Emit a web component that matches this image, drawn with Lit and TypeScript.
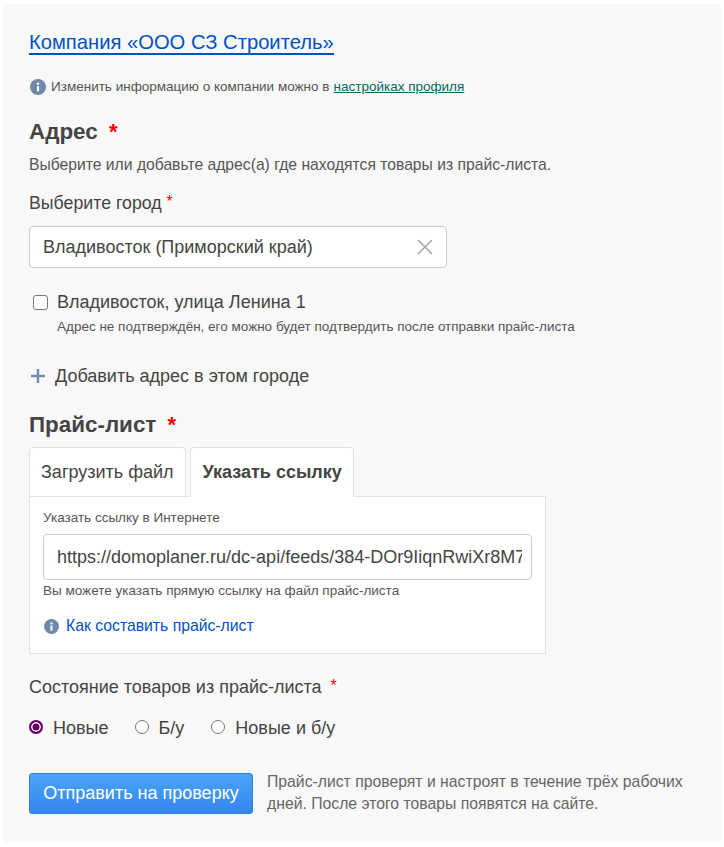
import { LitElement, html, css, svg } from "lit";
import { customElement } from "lit/decorators.js";

const info = (cls: string) => html`<svg class=${cls} viewBox="0 0 16 16" aria-hidden="true">
  <circle cx="8" cy="8" r="8" fill="#7089a9"></circle>
  <rect x="6.9" y="7" width="2.2" height="5.4" fill="#f8f8f8"></rect>
  <circle cx="8" cy="4.7" r="1.25" fill="#f8f8f8"></circle>
</svg>`;

@customElement("app-root")
export class AppRoot extends LitElement {
  static styles = css`
    :host {
      display: block;
      font-family: "Liberation Sans", Arial, sans-serif;
      color: #444;
      background: #fff;
      padding: 4px 2px 5px;
      box-sizing: border-box;
      height: 847px;
    }
    * { box-sizing: border-box; }
    .card {
      background: #f8f8f8;
      border-radius: 5px;
      height: 838px;
      padding: 26px 27px 0;
      display: flex;
      flex-direction: column;
      align-items: flex-start;
    }
    .company {
      font-size: 20.2px;
      line-height: 24px;
      color: #0051c2;
      text-decoration: none;
      border-bottom: 2px solid #0051c2;
      height: 25px;
    }
    .note {
      margin-top: 22px;
      display: flex;
      align-items: center;
      font-size: 13.5px;
      line-height: 20px;
      color: #555;
      height: 20px;
    }
    .note .i { width: 16px; height: 16px; margin: 0 5px 0 1px; }
    .note a { color: #00695c; text-decoration: underline; margin-left: 4px; }
    h2 {
      margin: 0;
      font-size: 22.4px;
      line-height: 28px;
      font-weight: 700;
      color: #444;
    }
    h2 .star { color: #f00; margin-left: 5px; font-size: 22px; font-weight: 700; }
    .h-addr { margin-top: 21px; }
    .desc { margin-top: 9px; font-size: 15.7px; line-height: 20px; color: #555; }
    .label { margin-top: 16px; font-size: 17.75px; line-height: 24px; color: #444; }
    .label .star { color: #f00; font-size: 16px; line-height: 0; vertical-align: 2px; }
    .select {
      margin-top: 11px;
      width: 418px;
      height: 42px;
      background: #fff;
      border: 1px solid #ccc;
      border-radius: 4px;
      display: flex;
      align-items: center;
      justify-content: space-between;
      padding: 0 12px 0 13px;
      font-size: 18px;
    }
    .select svg { width: 18px; height: 18px; }
    .addr { margin-top: 22px; margin-left: 4px; display: grid; grid-template-columns: 24px auto; }
    .box {
      width: 15px; height: 15px; margin-top: 5px;
      border: 1px solid #767676; border-radius: 3px; background: #fff;
    }
    .addr-main { font-size: 18px; line-height: 24px; }
    .addr-sub { grid-column: 2; margin-top: 4px; font-size: 13.5px; line-height: 18px; color: #555; }
    .add {
      margin-top: 28px;
      display: flex; align-items: center;
      font-size: 18px; line-height: 24px; color: #444;
    }
    .add svg { width: 14px; height: 14px; margin: 0 10px 0 2px; }
    .h-price { margin-top: 23px; }
    .tabs { margin-top: 8px; display: flex; gap: 4px; position: relative; z-index: 1; }
    .tab {
      height: 50px;
      border: 1px solid #e2e2e2;
      border-bottom: 0;
      border-radius: 4px 4px 0 0;
      background: #fff;
      padding: 0 11px;
      display: flex; align-items: center;
      font-size: 18px;
    }
    .tab.off { height: 49px; }
    .tab.on { font-weight: 700; padding: 0 11px 0 12px; }
    .panel {
      margin-top: -1px;
      width: 517px;
      height: 158px;
      background: #fff;
      border: 1px solid #e2e2e2;
      padding: 12px 13px 0;
    }
    .panel .cap { font-size: 13.5px; line-height: 18px; color: #555; }
    .url {
      margin-top: 7px;
      width: 489px;
      height: 46px;
      border: 1px solid #ccc;
      border-radius: 4px;
      padding: 0 9px 0 13px;
      display: flex; align-items: center;
    }
    .url span {
      display: block; overflow: hidden; white-space: nowrap;
      font-size: 18px; width: 100%;
    }
    .hint { margin-top: 2px; font-size: 13.5px; line-height: 18px; color: #555; }
    .how { margin-top: 16px; display: flex; align-items: center; font-size: 15.75px; line-height: 20px; color: #0051c2; }
    .how .i { width: 15px; height: 15px; margin: 1px 7px 0 1px; }
    .state { margin-top: 21px; font-size: 18px; line-height: 24px; }
    .state .star { color: #f00; font-size: 16px; line-height: 0; margin-left: 4px; vertical-align: 2px; }
    .radios { margin-top: 17px; display: flex; align-items: center; font-size: 18px; line-height: 24px; }
    .radio { display: flex; align-items: center; }
    .dot {
      width: 14px; height: 14px; border-radius: 50%;
      border: 1px solid #767676; background: #fff; margin-right: 10px;
      display: block; margin-top: -2px;
    }
    .dot.sel {
      border: 2px solid #660066;
      background: #660066;
      box-shadow: inset 0 0 0 1.5px #fff;
    }
    .r1 { margin-right: 26px; }
    .r2 { margin-right: 27px; }
    .foot { margin-top: 31px; display: flex; gap: 14px; align-items: center; }
    .btn {
      width: 224px; height: 41px;
      border: 1px solid #2f7fe0;
      border-radius: 3px;
      background: linear-gradient(#4aa5f8, #3585ee);
      color: #fff;
      font-family: inherit;
      font-size: 18px;
      padding: 0;
    }
    .foot p { margin: 0; width: 440px; font-size: 15.75px; line-height: 22px; color: #666; }
  `;

  render() {
    return html`<div class="card">
      <a class="company">Компания «ООО СЗ Строитель»</a>
      <div class="note">${info("i")}<span>Изменить информацию о компании можно в</span><a>настройках профиля</a></div>
      <h2 class="h-addr">Адрес <span class="star">*</span></h2>
      <div class="desc">Выберите или добавьте адрес(а) где находятся товары из прайс-листа.</div>
      <div class="label">Выберите город <span class="star">*</span></div>
      <div class="select">
        <span>Владивосток (Приморский край)</span>
        <svg viewBox="0 0 18 18" fill="none" stroke="#999" stroke-width="1.3">${svg`<path d="M2 2 16 16M16 2 2 16"></path>`}</svg>
      </div>
      <div class="addr">
        <span class="box"></span>
        <span class="addr-main">Владивосток, улица Ленина 1</span>
        <span class="addr-sub">Адрес не подтверждён, его можно будет подтвердить после отправки прайс-листа</span>
      </div>
      <div class="add">
        <svg viewBox="0 0 14 14" fill="none" stroke="#7089a9" stroke-width="2.4">${svg`<path d="M7 0V14M0 7H14"></path>`}</svg>
        <span>Добавить адрес в этом городе</span>
      </div>
      <h2 class="h-price">Прайс-лист <span class="star">*</span></h2>
      <div class="tabs">
        <div class="tab off">Загрузить файл</div>
        <div class="tab on">Указать ссылку</div>
      </div>
      <div class="panel">
        <div class="cap">Указать ссылку в Интернете</div>
        <div class="url"><span>https://domoplaner.ru/dc-api/feeds/384-DOr9IiqnRwiXr8M7AbCd</span></div>
        <div class="hint">Вы можете указать прямую ссылку на файл прайс-листа</div>
        <div class="how">${info("i")}<span>Как составить прайс-лист</span></div>
      </div>
      <div class="state">Состояние товаров из прайс-листа <span class="star">*</span></div>
      <div class="radios">
        <label class="radio r1"><span class="dot sel"></span>Новые</label>
        <label class="radio r2"><span class="dot"></span>Б/у</label>
        <label class="radio"><span class="dot"></span>Новые и б/у</label>
      </div>
      <div class="foot">
        <button class="btn">Отправить на проверку</button>
        <p>Прайс-лист проверят и настроят в течение трёх рабочих дней. После этого товары появятся на сайте.</p>
      </div>
    </div>`;
  }
}
